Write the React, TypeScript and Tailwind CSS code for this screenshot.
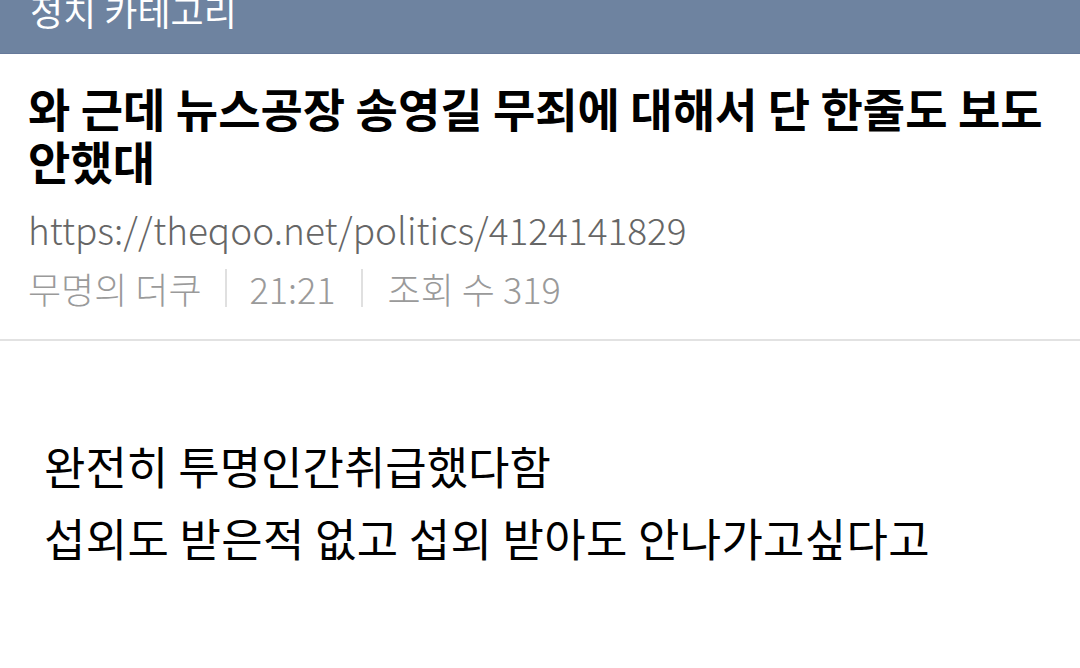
export default function App() {
  const font = { fontFamily: '"Noto Sans CJK KR", "Noto Sans", sans-serif' };
  return (
    <div className="w-[1080px] h-[668px] bg-white overflow-hidden" style={font}>
      <div className="h-[54px] bg-[#6e83a0] overflow-hidden border-b border-[#66799a]">
        <div className="-mt-[8px] pl-[30px] text-[36px] leading-[36px] text-white">정치 카테고리</div>
      </div>
      <div className="pt-[27px] px-[28px] pb-[28px] border-b-2 border-[#e2e2e2]">
        <h1 className="text-[46px] leading-[53px] font-bold text-black">
          와 근데 뉴스공장 송영길 무죄에 대해서 단 한줄도 보도 안했대
        </h1>
        <div className="mt-[19px] text-[37px] leading-[46px] font-light text-[#666666]">
          https://theqoo.net/politics/4124141829
        </div>
        <div className="mt-[13px] flex items-center text-[36px] leading-[46px] font-light text-[#9a9a9a]">
          <span>무명의 더쿠</span>
          <span className="mx-[23px] w-[2px] h-[38px] bg-[#e0e0e0]" />
          <span>21:21</span>
          <span className="mx-[25px] w-[2px] h-[38px] bg-[#e0e0e0]" />
          <span>조회 수 319</span>
        </div>
      </div>
      <div className="pt-[89px] px-[44px] text-[45px] leading-[72px] text-black">
        <p>완전히 투명인간취급했다함</p>
        <p className="tracking-[0.3px]">섭외도 받은적 없고 섭외 받아도 안나가고싶다고</p>
      </div>
    </div>
  );
}
